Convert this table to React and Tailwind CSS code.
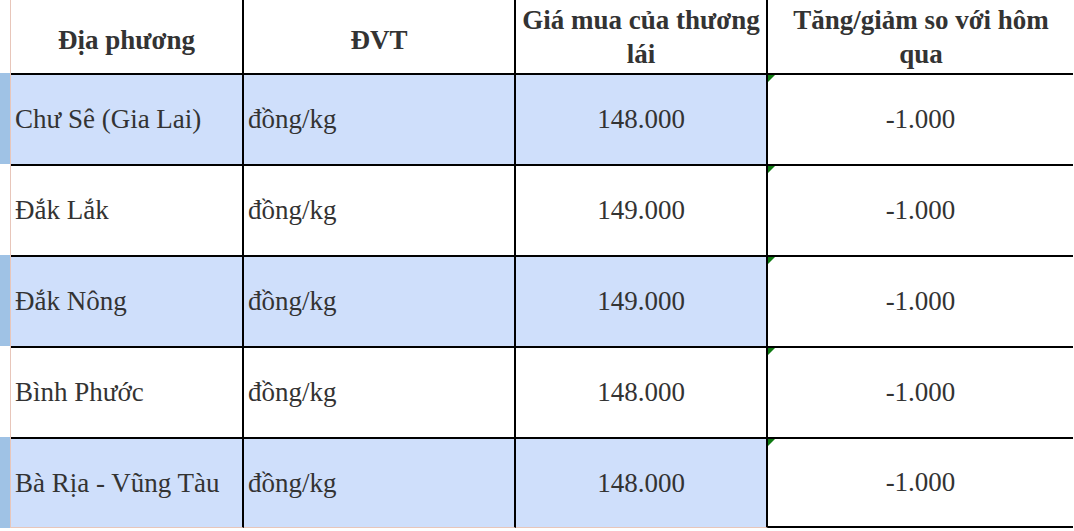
const rows = [
  { place: 'Chư Sê (Gia Lai)', unit: 'đồng/kg', price: '148.000', change: '-1.000', hl: true },
  { place: 'Đắk Lắk', unit: 'đồng/kg', price: '149.000', change: '-1.000', hl: false },
  { place: 'Đắk Nông', unit: 'đồng/kg', price: '149.000', change: '-1.000', hl: true },
  { place: 'Bình Phước', unit: 'đồng/kg', price: '148.000', change: '-1.000', hl: false },
  { place: 'Bà Rịa - Vũng Tàu', unit: 'đồng/kg', price: '148.000', change: '-1.000', hl: true },
];

const Corner = () => (
  <svg className="absolute left-0 top-0" width="7" height="7" viewBox="0 0 7 7">
    <polygon points="0,0 7,0 0,7" fill="#0f7a12" />
  </svg>
);

const App = () => {
  return (
    <div className="w-[1074px] h-[531px] overflow-hidden bg-white text-[#333] font-['Liberation_Serif',serif]">
      {/* header */}
      <div className="flex h-[73px]">
        <div className="w-[11px] shrink-0 border-r border-[#e8c6ba]" />
        <div className="w-[233px] shrink-0 border-r-2 border-black flex items-center justify-center font-bold text-[27px] leading-[34px] pt-[6px]">
          Địa phương
        </div>
        <div className="w-[272px] shrink-0 border-r-2 border-black flex items-center justify-center font-bold text-[27px] leading-[34px] pt-[6px]">
          ĐVT
        </div>
        <div className="w-[252px] shrink-0 border-r-2 border-black flex items-center justify-center text-center font-bold text-[27px] leading-[34px] px-1">
          Giá mua của thương lái
        </div>
        <div className="w-[306px] shrink-0 flex items-center justify-center text-center font-bold text-[27px] leading-[34px] px-2">
          Tăng/giảm so với hôm qua
        </div>
      </div>

      {rows.map((r, i) => {
        const last = i === rows.length - 1;
        const bg = r.hl ? 'bg-[#cfdffb]' : 'bg-white';
        return (
          <div key={i} className="flex h-[91px]">
            <div className={`w-[11px] shrink-0 border-r border-[#e8c6ba] ${r.hl ? 'bg-[#9fc2e5]' : 'bg-white'}`} />
            <div
              className={`w-[233px] shrink-0 border-t-2 border-r-2 border-t-black border-r-black ${bg} flex items-center pl-[4px] text-[27px] ${last ? 'border-b border-b-[#e8c6ba]' : ''}`}
            >
              {r.place}
            </div>
            <div
              className={`w-[272px] shrink-0 border-t-2 border-r-2 border-t-black border-r-black ${bg} flex items-center pl-[4px] text-[27px] ${last ? 'border-b border-b-[#e8c6ba]' : ''}`}
            >
              {r.unit}
            </div>
            <div
              className={`w-[252px] shrink-0 border-t-2 border-r-2 border-t-black border-r-black ${bg} flex items-center justify-center text-[27px] ${last ? 'border-b border-b-[#e8c6ba]' : ''}`}
            >
              {r.price}
            </div>
            <div
              className={`relative w-[305px] shrink-0 border-t-2 border-black bg-white flex items-center justify-center text-[27px] ${last ? 'border-b-2' : ''}`}
            >
              <Corner />
              {r.change}
            </div>
          </div>
        );
      })}
    </div>
  );
};

export default App;
